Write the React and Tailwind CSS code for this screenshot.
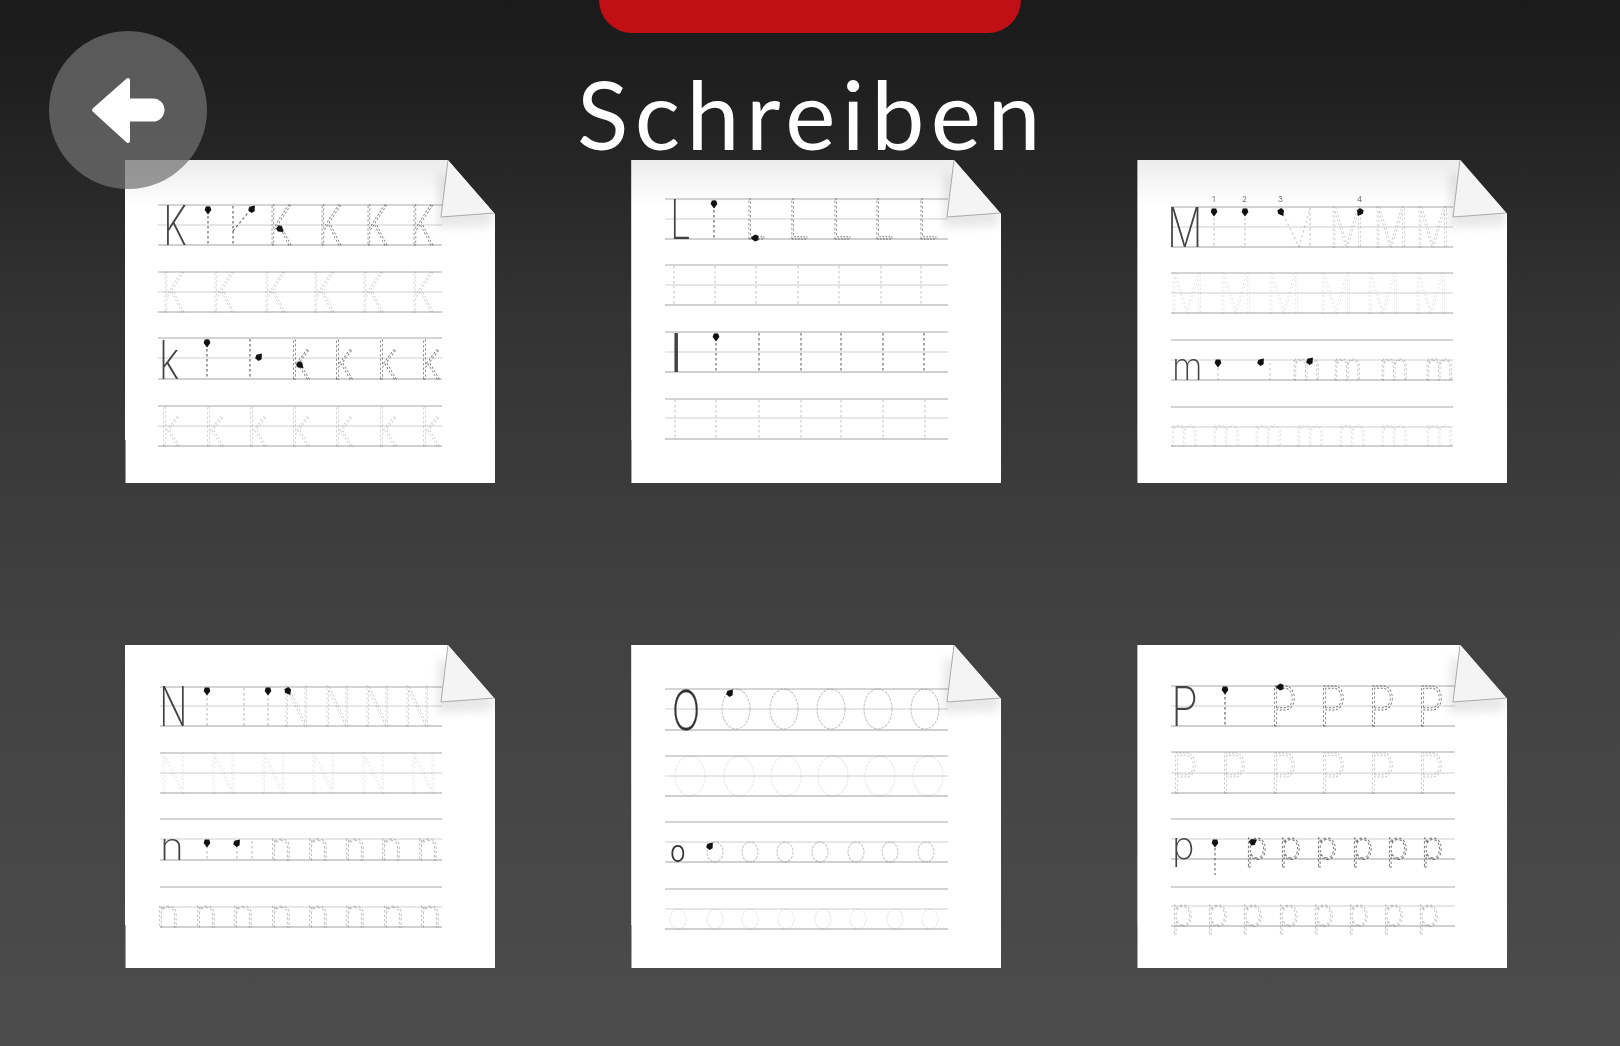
const INK = "#4a4a4a";

function Rules({ rows, x1, x2 }) {
  return rows.map(([t, m, b], i) => (
    <g key={i}>
      <line x1={x1} x2={x2} y1={t} y2={t} stroke="#a9a9a9" strokeWidth="1.1" />
      <line x1={x1} x2={x2} y1={m} y2={m} stroke="#cfcfcf" strokeWidth="1" />
      <line x1={x1} x2={x2} y1={b} y2={b} stroke="#a2a2a2" strokeWidth="1.2" />
    </g>
  ));
}

function Solid({ c, x, y, s, sx, w = 200 }) {
  return (
    <text transform={`translate(${x} ${y}) scale(${sx} 1)`} fontSize={s} fontWeight={w} fill="#444">
      {c}
    </text>
  );
}

function Trace({ c, xs, y, s, sx, o }) {
  return xs.map((x) => (
    <text
      key={x}
      transform={`translate(${x} ${y}) scale(${sx} 1)`}
      fontSize={s}
      fontWeight="200"
      fill="none"
      stroke={INK}
      strokeWidth="1"
      strokeDasharray="2.5 2"
      opacity={o}
    >
      {c}
    </text>
  ));
}

function Stems({ xs, y1, y2, o }) {
  return xs.map((x) => (
    <line key={x} x1={x} x2={x} y1={y1} y2={y2} stroke={INK} strokeWidth="1.2" strokeDasharray="2.5 2.5" opacity={o} />
  ));
}

function Seg({ d, o = 0.8 }) {
  return d.map(([a, b, c, e], i) => (
    <line key={i} x1={a} y1={b} x2={c} y2={e} stroke={INK} strokeWidth="1.2" strokeDasharray="2.5 2.5" opacity={o} />
  ));
}

function Ovals({ xs, cy, rx, ry, o }) {
  return xs.map((x) => (
    <ellipse key={x} cx={x} cy={cy} rx={rx} ry={ry} fill="none" stroke="#777" strokeWidth="1.1" strokeDasharray="3 1" opacity={o} />
  ));
}

function Arrows({ pts }) {
  return pts.map(([x, y, r], i) => (
    <g key={i} transform={`translate(${x} ${y}) rotate(${r})`}>
      <path d="M0 -4.5 L3.4 0 L2.2 3.4 L-2.2 3.4 L-3.4 0 Z" fill="#111" />
    </g>
  ));
}

function Sheet({ rows, x1, x2, children, shaded }) {
  return (
    <div
      className={
        shaded
          ? "relative h-[323px] w-[370px] bg-gradient-to-b from-[#ececec] to-white to-[14%] [clip-path:polygon(0_0,323px_0,370px_54px,370px_100%,0_100%)]"
          : "relative h-[323px] w-[370px] bg-white [clip-path:polygon(0_0,323px_0,370px_54px,370px_100%,0_100%)]"
      }
    >
      <svg viewBox="0 0 370 323" className="block h-[323px] w-[370px] font-['Inter',sans-serif]">
        <g className="blur-[0.5px]">
          <Rules rows={rows} x1={x1} x2={x2} />
          {children}
        </g>
        <polygon points="314,10 370,54 366,66 312,68" fill="#000" opacity="0.09" className="blur-[5px]" />
        <polygon points="323,0 369,53 316,57" fill="#f4f4f4" />
        <path d="M323 0 L316 57 L369 53" fill="none" stroke="#8d8d8d" strokeWidth="0.7" />
        <path d="M0.5 280 V323" stroke="#9a9a9a" strokeWidth="1" />
      </svg>
    </div>
  );
}

function SheetK() {
  return (
    <Sheet shaded x1={33} x2={317} rows={[[45, 65, 85], [112, 132, 152], [178, 198, 219], [246, 266, 286]]}>
      <Solid c="K" x={38} y={85} s={55} sx={0.7} />
      <Stems xs={[83, 108]} y1={46} y2={85} o={0.85} />
      <Seg d={[[108, 71, 127, 48]]} />
      <Trace c="K" xs={[143, 193, 239, 285]} y={85} s={55} sx={0.7} o={0.75} />
      <Trace c="K" xs={[36, 86, 137, 186, 235, 285]} y={152} s={55} sx={0.7} o={0.28} />
      <Solid c="k" x={34} y={219} s={53} sx={0.76} />
      <Stems xs={[82, 125]} y1={179} y2={219} o={0.85} />
      <Trace c="k" xs={[165, 208, 252, 295]} y={219} s={53} sx={0.76} o={0.75} />
      <Trace c="k" xs={[35, 79, 122, 165, 208, 252, 295]} y={286} s={53} sx={0.76} o={0.28} />
      <Arrows pts={[[83, 50, 180], [127, 49, 40], [155, 69, 130], [82, 183, 180], [134, 197, 40], [175, 205, 130]]} />
    </Sheet>
  );
}

function SheetL() {
  return (
    <Sheet shaded x1={34} x2={317} rows={[[39, 59, 79], [105, 125, 145], [172, 192, 212], [239, 258, 279]]}>
      <Solid c="L" x={39} y={79} s={55} sx={0.68} />
      <Stems xs={[83]} y1={40} y2={79} o={0.85} />
      <Trace c="L" xs={[114, 157, 200, 242, 286]} y={79} s={55} sx={0.68} o={0.75} />
      <Stems xs={[43, 84, 125, 167, 208, 250, 290]} y1={106} y2={145} o={0.28} />
      <Solid c="l" x={39} y={212} s={53} sx={1} w={300} />
      <Stems xs={[85, 128, 170, 210, 252, 293]} y1={173} y2={212} o={0.8} />
      <Stems xs={[44, 85, 128, 170, 210, 252, 294]} y1={240} y2={279} o={0.28} />
      <Arrows pts={[[83, 44, 180], [124, 78, 270], [85, 177, 180]]} />
    </Sheet>
  );
}

function SheetM() {
  return (
    <Sheet shaded x1={34} x2={316} rows={[[47, 67, 87], [113, 133, 153], [180, 200, 220], [247, 267, 286]]}>
      <Solid c="M" x={30} y={87} s={55} sx={0.72} />
      <Stems xs={[77, 108, 173]} y1={48} y2={87} o={0.3} />
      <Seg d={[[144, 50, 162, 87], [162, 87, 173, 48]]} o={0.25} />
      <Trace c="M" xs={[192, 236, 278]} y={87} s={55} sx={0.72} o={0.3} />
      <Trace c="M" xs={[32, 81, 129, 181, 228, 276]} y={153} s={55} sx={0.72} o={0.14} />
      <Solid c="m" x={35} y={220} s={37} sx={0.95} />
      <Stems xs={[81, 133]} y1={203} y2={220} o={0.3} />
      <Trace c="m" xs={[154, 195, 242, 287]} y={220} s={37} sx={0.95} o={0.3} />
      <Trace c="m" xs={[32, 74, 116, 158, 200, 242, 287]} y={286} s={37} sx={0.95} o={0.14} />
      <Arrows pts={[[77, 52, 180], [108, 52, 180], [144, 52, 150], [223, 52, 210], [81, 203, 180], [124, 202, 40], [173, 201, 40]]} />
      <g fontSize="8" fill="#777">
        <text x="75" y="42">1</text>
        <text x="105" y="42">2</text>
        <text x="141" y="42">3</text>
        <text x="220" y="42">4</text>
      </g>
    </Sheet>
  );
}

function SheetN() {
  return (
    <Sheet x1={35} x2={317} rows={[[42, 61, 81], [108, 128, 148], [174, 194, 215], [242, 262, 282]]}>
      <Solid c="N" x={34} y={81} s={55} sx={0.68} />
      <Stems xs={[82, 119, 143]} y1={43} y2={81} o={0.35} />
      <Trace c="N" xs={[157, 198, 238, 278]} y={81} s={55} sx={0.68} o={0.3} />
      <Trace c="N" xs={[34, 84, 134, 184, 234, 284]} y={148} s={55} sx={0.68} o={0.14} />
      <Solid c="n" x={35} y={215} s={37} sx={1.1} />
      <Stems xs={[82, 112, 127]} y1={196} y2={215} o={0.35} />
      <Trace c="n" xs={[144, 181, 218, 254, 291]} y={215} s={37} sx={1.1} o={0.35} />
      <Trace c="n" xs={[31, 69, 106, 144, 181, 218, 256, 293]} y={282} s={37} sx={1.1} o={0.32} />
      <Arrows pts={[[82, 46, 180], [143, 46, 180], [163, 46, 150], [82, 198, 180], [112, 198, 40]]} />
    </Sheet>
  );
}

function SheetO() {
  return (
    <Sheet x1={34} x2={317} rows={[[44, 64, 85], [111, 131, 151], [177, 197, 217], [244, 264, 284]]}>
      <text transform="translate(41 85) scale(0.68 1)" fontSize="55" fontWeight="200" fill="#333" stroke="#333" strokeWidth="0.4">O</text>
      <Ovals xs={[105, 153, 200, 247, 294]} cy={64} rx={14} ry={20} o={0.4} />
      <Ovals xs={[59, 108, 155, 202, 249, 297]} cy={131} rx={15} ry={20} o={0.16} />
      <text transform="translate(39 217) scale(0.88 1)" fontSize="30" fontWeight="300" fill="#333">o</text>
      <Ovals xs={[84, 119, 154, 189, 225, 259, 295]} cy={207} rx={8} ry={10} o={0.38} />
      <Ovals xs={[47, 84, 119, 155, 192, 227, 264, 299]} cy={274} rx={8} ry={10} o={0.16} />
      <Arrows pts={[[99, 48, 40], [79, 201, 40]]} />
    </Sheet>
  );
}

function SheetP() {
  return (
    <Sheet x1={34} x2={318} rows={[[41, 61, 81], [107, 128, 148], [174, 194, 214], [242, 261, 281]]}>
      <Solid c="P" x={34} y={81} s={55} sx={0.8} />
      <Stems xs={[88]} y1={42} y2={81} o={0.85} />
      <Trace c="P" xs={[133, 182, 231, 280]} y={81} s={55} sx={0.8} o={0.75} />
      <Trace c="P" xs={[34, 83, 133, 182, 231, 280]} y={148} s={55} sx={0.8} o={0.32} />
      <Solid c="p" x={35} y={214} s={38} sx={1} />
      <Stems xs={[78]} y1={198} y2={230} o={0.8} />
      <Trace c="p" xs={[108, 142, 178, 214, 249, 284]} y={214} s={38} sx={1} o={0.75} />
      <Trace c="p" xs={[34, 69, 104, 140, 175, 210, 245, 280]} y={281} s={38} sx={1} o={0.32} />
      <Arrows pts={[[88, 45, 180], [143, 42, 270], [78, 198, 180], [116, 197, 60]]} />
    </Sheet>
  );
}

export default function App() {
  return (
    <div className="relative flex h-screen w-full flex-col overflow-hidden bg-[linear-gradient(180deg,#1a1a1a_0%,#1f1f1f_8%,#333333_30%,#414141_60%,#4c4c4c_100%)] font-['Lato',sans-serif]">
      <div className="flex justify-center">
        <div className="h-[33px] w-[422px] rounded-b-[33px] bg-[#c01016]" />
      </div>
      <h1 className="flex h-[127px] items-start justify-center pt-[30px] pl-[4px] text-[95px] leading-[100px] font-normal tracking-[6.5px] text-white">
        Schreiben
      </h1>
      <div className="grid grid-cols-[repeat(3,370px)] gap-x-[136.2px] gap-y-[162px] pl-[125px]">
        <SheetK />
        <SheetL />
        <SheetM />
        <SheetN />
        <SheetO />
        <SheetP />
      </div>
      <button className="absolute top-[31px] left-[49px] flex size-[158px] items-center justify-center rounded-full bg-[rgba(114,114,114,0.72)]">
        <svg viewBox="0 0 158 158" className="size-[158px]">
          <path
            d="M45 79 L79 49 V69.5 H104 A9.5 9.5 0 0 1 104 88.5 H79 V110 Z"
            fill="#fff"
            stroke="#fff"
            strokeWidth="4"
            strokeLinejoin="round"
          />
        </svg>
      </button>
    </div>
  );
}
